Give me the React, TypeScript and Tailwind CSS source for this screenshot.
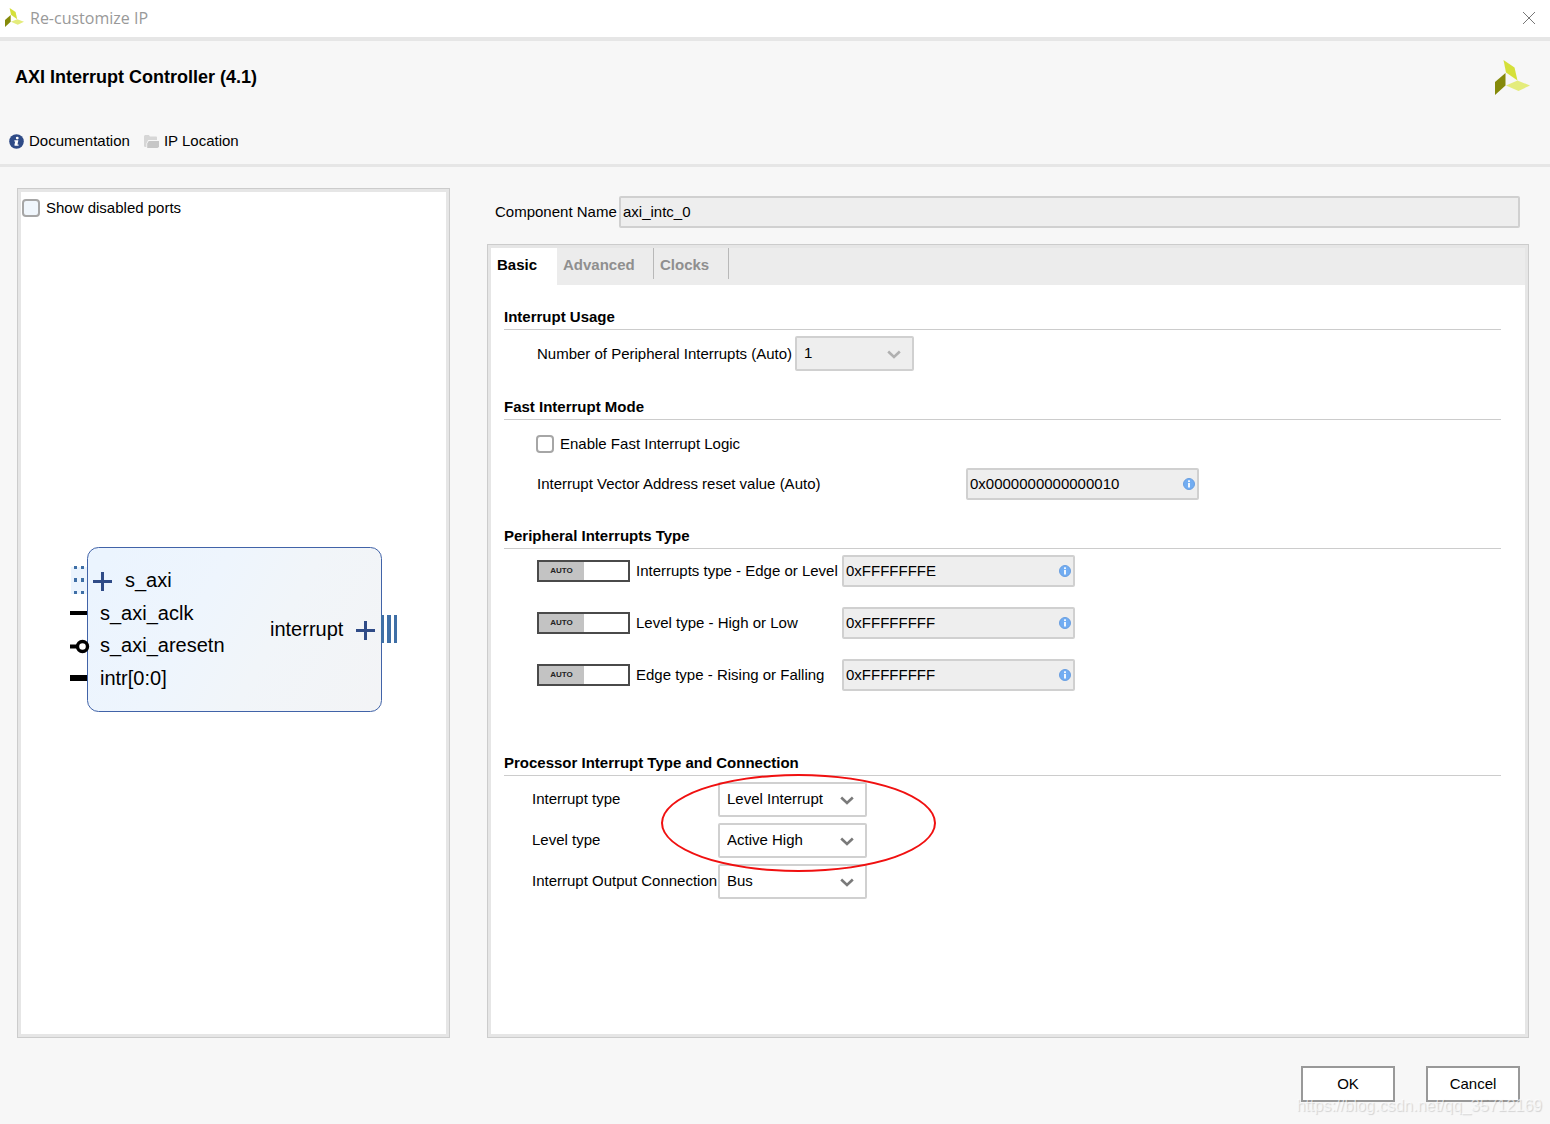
import { useId, useState } from "react";
import type { ReactNode } from "react";

const XilinxLogo = ({ className }: { className?: string }) => (
  <svg viewBox="0 0 35 35" className={className} aria-hidden="true">
    <path d="M8.5 0 L19.5 7.5 L22.5 20.5 L11 12.5 Z" fill="#d5e03a" />
    <path d="M0 22 L10.5 13 L10.5 25.5 L0 35 Z" fill="#858a0a" />
    <path d="M11 25.5 L22.5 20.5 L35 25.5 L23.5 31 Z" fill="#e4ec7c" />
  </svg>
);

const InfoIcon = ({ className, fill }: { className?: string; fill: string }) => (
  <svg viewBox="0 0 16 16" className={className} aria-hidden="true">
    <circle cx="8" cy="8" r="7.8" fill={fill} />
    <circle cx="8.8" cy="4.3" r="1.5" fill="#fff" />
    <path d="M5.8 6.6h4.2l-1 4.6h1.2v1.4H6l-.2-1.2.8-3.4H5.6z" fill="#fff" />
  </svg>
);

const HintIcon = () => (
  <svg viewBox="0 0 12 12" className="h-3 w-3" aria-hidden="true">
    <circle cx="6" cy="6" r="5.5" fill="#72adf2" stroke="#6a9fe0" strokeWidth="1" />
    <rect x="5.1" y="2.3" width="1.8" height="1.7" fill="#fff" />
    <rect x="5.1" y="4.9" width="1.8" height="4.6" fill="#fff" />
  </svg>
);

const FolderIcon = () => (
  <svg viewBox="0 0 15 13" className="h-[13px] w-[15px]" aria-hidden="true">
    <path d="M0 1.5Q0 0 1.2 0h3.6L6 1.5h6.2Q13 1.5 13 2.5V5H4.2L2.4 8.4V12H1.2Q0 12 0 11z" fill="#d6d6d6" />
    <path d="M4.8 6H15v5.2Q14.6 13 13.4 13H3.2V8.6z" fill="#c6c6c6" />
  </svg>
);

const Chevron = ({ className }: { className?: string }) => (
  <svg viewBox="0 0 14 9" className={className} fill="none" stroke="currentColor" strokeWidth="2.6" aria-hidden="true">
    <path d="M1.2 1.5 L7 7 L12.8 1.5" />
  </svg>
);

function Select({ id, value, options, className, disabled }: {
  id: string;
  value: string;
  options: string[];
  className: string;
  disabled?: boolean;
}) {
  const [selected, setSelected] = useState(value);
  return (
    <div className={`relative shrink-0 ${className}`}>
      <select
        id={id}
        value={selected}
        disabled={disabled}
        onChange={(e) => setSelected(e.target.value)}
        className="block h-[35px] w-full appearance-none rounded-[2px] border-2 border-[#d0d0d0] bg-white pb-[2px] pl-[7px] pr-8 text-black opacity-100 disabled:bg-[#eeeeee]"
      >
        {options.map((o) => (
          <option key={o}>{o}</option>
        ))}
      </select>
      <Chevron
        className={`pointer-events-none absolute right-[13px] top-[14px] h-[9px] w-[14px] ${disabled ? "text-[#b0b0b0]" : "text-[#7a7a7a]"}`}
      />
    </div>
  );
}

function HexField({ id, value }: { id: string; value: string }) {
  return (
    <div className="flex h-8 w-[233px] items-center rounded-[2px] border-2 border-[#d0d0d0] bg-[#eeeeee] px-[2px]">
      <input id={id} value={value} readOnly className="min-w-0 flex-1 bg-transparent outline-none" />
      <HintIcon />
    </div>
  );
}

function Checkbox({ label, tint }: { label: string; tint?: boolean }) {
  const id = useId();
  return (
    <div className="flex items-center gap-1.5">
      <input
        id={id}
        type="checkbox"
        className={`h-[18px] w-[18px] appearance-none rounded-[4px] border-2 border-[#a6a6a6] checked:bg-[#2f4b87] ${tint ? "bg-[#f0f6fc]" : "bg-white"}`}
      />
      <label htmlFor={id}>{label}</label>
    </div>
  );
}

function AutoSwitch({ label }: { label: string }) {
  const [on, setOn] = useState(false);
  return (
    <button
      type="button"
      role="switch"
      aria-checked={on}
      aria-label={label}
      onClick={() => setOn(!on)}
      className={`flex h-[22px] w-[93px] border-2 border-[#4a4a4a] bg-white ${on ? "justify-end" : "justify-start"}`}
    >
      <span className="flex h-full w-[45px] items-center justify-center bg-[#c3c3c3] text-[8px] font-bold text-[#222222]">
        AUTO
      </span>
    </button>
  );
}

function Section({ title, children }: { title: string; children: ReactNode }) {
  return (
    <section>
      <h2 className="mb-1.5 border-b border-[#cccccc] pb-[2px] font-bold leading-5">{title}</h2>
      {children}
    </section>
  );
}

// Block symbol with its ports
const BlockDiagram = () => (
  <svg width="328" height="165" viewBox="0 0 328 165" role="img" aria-label="AXI Interrupt Controller block">
    <defs>
      <linearGradient id="block" gradientUnits="userSpaceOnUse" x1="40" y1="0" x2="310" y2="150">
        <stop offset="0" stopColor="#ebf4fe" />
        <stop offset="0.35" stopColor="#eef5fd" />
        <stop offset="0.6" stopColor="#f1f5f9" />
        <stop offset="1" stopColor="#f3f4f6" />
      </linearGradient>
    </defs>
    <rect x="1" y="20" width="17" height="27" fill="#ebf4fe" />
    <rect x="17.5" y="0.5" width="294" height="164" rx="11" fill="url(#block)" stroke="#4163a8" />
    <g fill="#3f6fa6">
      <rect x="4" y="19" width="3" height="3" />
      <rect x="11" y="19" width="3" height="3" />
      <rect x="4" y="31" width="3" height="4" />
      <rect x="11" y="31" width="3" height="4" />
      <rect x="4" y="44" width="3" height="3" />
      <rect x="11" y="44" width="3" height="3" />
      <rect x="311" y="68" width="3" height="28" />
      <rect x="317" y="68" width="4" height="28" />
      <rect x="324" y="68" width="3" height="28" />
    </g>
    <g stroke="#2f4b87" strokeWidth="3">
      <path d="M23 34.5H42M32.5 25V44" />
      <path d="M286 83.5H305M295.5 74V93" />
    </g>
    <g stroke="#000" fill="none">
      <path d="M0 66H17" strokeWidth="4" />
      <path d="M0 99.5H7" strokeWidth="4" />
      <circle cx="12.5" cy="99.5" r="5" fill="#fff" strokeWidth="3.4" />
      <path d="M0 131H17" strokeWidth="6" />
    </g>
    <g fontSize="20" fill="#000">
      <text x="55" y="40">s_axi</text>
      <text x="30" y="73">s_axi_aclk</text>
      <text x="30" y="105">s_axi_aresetn</text>
      <text x="30" y="138">intr[0:0]</text>
      <text x="200" y="89">interrupt</text>
    </g>
  </svg>
);

const peripheralTypes = [
  { id: "irq-kind", label: "Interrupts type - Edge or Level", value: "0xFFFFFFFE" },
  { id: "irq-level", label: "Level type - High or Low", value: "0xFFFFFFFF" },
  { id: "irq-edge", label: "Edge type - Rising or Falling", value: "0xFFFFFFFF" },
];

const processorTypes = [
  { id: "cpu-type", label: "Interrupt type", options: ["Level Interrupt", "Edge Interrupt"] },
  { id: "cpu-level", label: "Level type", options: ["Active High", "Active Low"] },
  { id: "cpu-conn", label: "Interrupt Output Connection", options: ["Bus", "Single"] },
];

export default function App() {
  return (
    <div className="relative flex min-h-screen flex-col bg-[#f7f7f7] font-['Liberation_Sans',Arial,sans-serif] text-[15px] leading-5 text-black">
      <header className="flex h-[41px] items-center justify-between border-b-4 border-[#e6e6e6] bg-white pb-[2px] pl-[5px] pr-[15px]">
        <div className="flex items-center gap-1.5">
          <XilinxLogo className="h-[19px] w-[19px]" />
          <span className="font-['Open_Sans','Noto_Sans',sans-serif] text-[16px] text-[#999999]">Re-customize IP</span>
        </div>
        <button type="button" aria-label="Close">
          <svg viewBox="0 0 12 12" className="h-3 w-3" stroke="#777" fill="none">
            <path d="M0 0L12 12M12 0L0 12" />
          </svg>
        </button>
      </header>

      <div className="border-b-[3px] border-[#e6e6e6] pb-[13px] pl-[9px] pr-[20px] pt-[19px]">
        <div className="flex items-start justify-between pl-1.5">
          <h1 className="pt-[5px] text-[18px] font-bold leading-6">AXI Interrupt Controller (4.1)</h1>
          <XilinxLogo className="h-[35px] w-[35px]" />
        </div>
        <nav className="mt-9 flex gap-3.5">
          <a href="#documentation" className="flex items-center gap-[5px]">
            <InfoIcon className="h-[15px] w-[15px]" fill="#2f4b87" />
            Documentation
          </a>
          <a href="#location" className="flex items-center gap-[5px]">
            <FolderIcon />
            IP Location
          </a>
        </nav>
      </div>

      <main className="flex flex-1 gap-[37px] pl-[17px] pr-[21px] pt-[21px]">
        <aside className="flex w-[433px] shrink-0 flex-col border border-[#cccccc] bg-[#e6e6e6] p-[3px]">
          <div className="flex flex-1 flex-col bg-white">
            <div className="pl-px pt-1.5">
              <Checkbox label="Show disabled ports" tint />
            </div>
            <div className="flex flex-1 items-center justify-center pt-1.5">
              <BlockDiagram />
            </div>
          </div>
        </aside>

        <div className="flex min-w-0 flex-1 flex-col pt-2">
          <div className="flex items-center pl-2 pr-[9px]">
            <label htmlFor="component-name" className="w-[124px] whitespace-nowrap">
              Component Name
            </label>
            <input
              id="component-name"
              defaultValue="axi_intc_0"
              className="h-8 min-w-0 flex-1 rounded-[2px] border-2 border-[#d0d0d0] bg-[#eeeeee] px-[2px] pb-px outline-none"
            />
          </div>

          <div className="mt-4 flex flex-1 flex-col border border-[#cccccc] bg-[#e6e6e6] p-[3px]">
            <div role="tablist" className="flex h-[37px] items-start bg-[#ececec] font-bold text-[#8f8f8f]">
              <button type="button" role="tab" aria-selected="true" className="h-[37px] w-[66px] bg-white pb-[3px] pl-1.5 text-left text-black">
                Basic
              </button>
              <button type="button" role="tab" aria-selected="false" className="h-[31px] w-[97px] border-r border-[#b8b8b8] pl-1.5 pt-[3px] text-left">
                Advanced
              </button>
              <button type="button" role="tab" aria-selected="false" className="h-[31px] w-[75px] border-r border-[#b8b8b8] pl-1.5 pt-[3px] text-left">
                Clocks
              </button>
            </div>

            <div role="tabpanel" className="flex flex-1 flex-col gap-[26px] bg-white pl-[13px] pr-6 pt-[22px]">
              <Section title="Interrupt Usage">
                <div className="flex items-center pl-[33px]">
                  <label htmlFor="irq-count" className="w-[258px] whitespace-nowrap">
                    Number of Peripheral Interrupts (Auto)
                  </label>
                  <Select id="irq-count" value="1" options={["1"]} className="w-[119px]" disabled />
                </div>
              </Section>

              <Section title="Fast Interrupt Mode">
                <div className="pl-8 pt-2">
                  <Checkbox label="Enable Fast Interrupt Logic" />
                </div>
                <div className="mt-[14px] flex items-center pl-[33px]">
                  <label htmlFor="vector-reset" className="w-[429px]">
                    Interrupt Vector Address reset value (Auto)
                  </label>
                  <HexField id="vector-reset" value="0x0000000000000010" />
                </div>
              </Section>

              <Section title="Peripheral Interrupts Type">
                <div className="flex flex-col gap-5 pb-9 pl-[33px]">
                  {peripheralTypes.map((row) => (
                    <div key={row.id} className="flex items-center">
                      <AutoSwitch label={`${row.label} auto`} />
                      <label htmlFor={row.id} className="w-[212px] whitespace-nowrap pl-1.5">
                        {row.label}
                      </label>
                      <HexField id={row.id} value={row.value} />
                    </div>
                  ))}
                </div>
              </Section>

              <Section title="Processor Interrupt Type and Connection">
                <div className="relative flex flex-col gap-1.5 pl-7">
                  {processorTypes.map((row) => (
                    <div key={row.id} className="flex items-center">
                      <label htmlFor={row.id} className="w-[186px] shrink-0 whitespace-nowrap pb-[2px]">
                        {row.label}
                      </label>
                      <Select id={row.id} value={row.options[0]} options={row.options} className="w-[149px]" />
                    </div>
                  ))}
                  <div className="pointer-events-none absolute left-[157px] top-[-8px] h-[98px] w-[275px] rounded-[50%] border-2 border-[#f01010]" />
                </div>
              </Section>
            </div>
          </div>
        </div>
      </main>

      <footer className="flex justify-end gap-[31px] pb-[22px] pr-[30px] pt-7">
        <button type="button" className="h-9 w-[94px] border-2 border-[#999999] bg-white">OK</button>
        <button type="button" className="h-9 w-[94px] border-2 border-[#999999] bg-white">Cancel</button>
      </footer>
      <div className="pointer-events-none absolute bottom-2 right-2 text-[16px] text-white/60 [text-shadow:1px_1px_1px_rgba(0,0,0,0.15)]">
        https://blog.csdn.net/qq_35712169
      </div>
    </div>
  );
}
